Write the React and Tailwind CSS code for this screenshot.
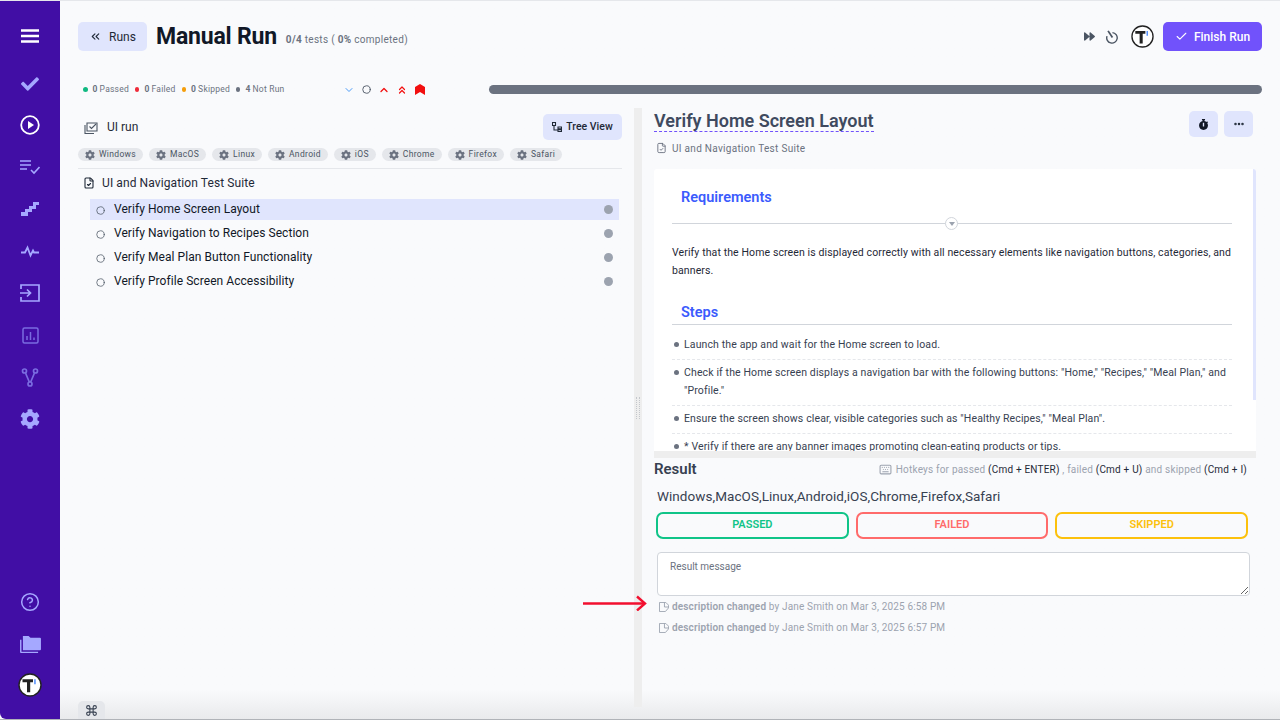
import React from 'react';
import { Check, ChevronDown, ChevronUp, ChevronsLeft, ChevronsUp, Circle, CircleHelp, Command, Ellipsis, Keyboard, FileCheck } from 'lucide-react';
import { FaCheck, FaCog, FaForward, FaStopwatch } from 'react-icons/fa';

const tags = ['Windows', 'MacOS', 'Linux', 'Android', 'iOS', 'Chrome', 'Firefox', 'Safari'];
const cases = [
  'Verify Home Screen Layout',
  'Verify Navigation to Recipes Section',
  'Verify Meal Plan Button Functionality',
  'Verify Profile Screen Accessibility',
];
const stats = [
  { n: '0', label: 'Passed', dot: 'bg-[#10b981]' },
  { n: '0', label: 'Failed', dot: 'bg-[#ef2b3a]' },
  { n: '0', label: 'Skipped', dot: 'bg-[#f59e0b]' },
  { n: '4', label: 'Not Run', dot: 'bg-[#6b7280]' },
];

const Logo = ({ className }) => (
  <svg viewBox="0 0 24 24" className={className}>
    <circle cx="12" cy="12" r="11" fill="#fff" stroke="#222" strokeWidth="1.4" />
    <path d="M4.500 6.200h10.500v3h-2.800v10H9v-10H4.500z" fill="#222" />
    <path d="M16.200 6.200h1.500v5h-1.500z" fill="#4f8dfd" />
  </svg>
);

const PlayCircle = () => (
  <svg viewBox="0 0 20 20" className="w-[20px] h-[20px]" fill="none" stroke="#fff" strokeWidth="1.8">
    <circle cx="10" cy="10" r="8.800" />
    <path d="M8 6l6 4-6 4z" fill="#fff" stroke="none" />
  </svg>
);

const ListCheck = () => (
  <svg viewBox="0 0 20 16" className="w-5 h-4" fill="none" stroke="#a5a8ff" strokeWidth="1.6">
    <path d="M0 2h11M0 6h11M0 10h7" />
    <path d="M11 11l3 3 5.500-6" />
  </svg>
);

const Stairs = () => (
  <svg viewBox="0 0 18 14" className="w-[18px] h-[14px]" fill="#a5a8ff">
    <path d="M0 14v-4h4V7h4V4h4V0h6v3h-3v4h-4v3H7v4z" />
  </svg>
);

const Pulse = () => (
  <svg viewBox="0 0 18 13" className="w-[18px] h-[13px]" fill="none" stroke="#a5a8ff" strokeWidth="1.8">
    <path d="M0 7.500h4l2.500-5 3 8 2.500-5 1 2h5" />
  </svg>
);

const ImportBox = () => (
  <svg viewBox="0 0 20 18" className="w-5 h-[18px]" fill="none" stroke="#a5a8ff" strokeWidth="1.7">
    <path d="M1 5V1h18v16H1v-4" />
    <path d="M0 9h10M7 5.500L10.500 9 7 12.500" />
  </svg>
);

const ChartBox = () => (
  <svg viewBox="0 0 17 17" className="w-[17px] h-[17px]" fill="none" stroke="#7a6ce0" strokeWidth="1.500">
    <rect x="1" y="1" width="15" height="15" rx="1.500" />
    <path d="M5 13V9M8.500 13V5M12 13v-2.500" />
  </svg>
);

const Fork = () => (
  <svg viewBox="0 0 18 19" className="w-[18px] h-[19px]" fill="none" stroke="#7a6ce0" strokeWidth="1.700">
    <circle cx="3.500" cy="3" r="2" />
    <circle cx="14.500" cy="3" r="2" />
    <circle cx="9" cy="16" r="2" />
    <path d="M4.500 5L8.300 14M13.500 5L9.700 14" />
  </svg>
);

const Folders = () => (
  <svg viewBox="0 0 24 20" className="w-[23px] h-[19px]" fill="#a5a8ff">
    <path d="M4 1h6l2 2h10a1 1 0 0 1 1 1v11a1 1 0 0 1-1 1H4z" />
    <path d="M1 5h1.500v12.500H20V19H2a1 1 0 0 1-1-1z" />
  </svg>
);

const Sidebar = () => (
  <aside className="w-[60px] shrink-0 bg-[#410ea5] flex flex-col items-center rounded-bl-md">
    <div className="h-[70px] flex items-center">
      <svg viewBox="0 0 18 14" className="w-[18px] h-[14px]" fill="none" stroke="#fff" strokeWidth="2.600">
        <path d="M0 1.500h18M0 7h18M0 12.500h18" />
      </svg>
    </div>
    <div className="flex flex-col items-center">
      <div className="h-[26px] flex items-center"><FaCheck className="text-[#a5a8ff] w-[18px] h-[18px]" /></div>
      <div className="h-[42px] mt-[7px] flex items-center"><PlayCircle /></div>
      <div className="h-[42px] flex items-center"><ListCheck /></div>
      <div className="h-[42px] flex items-center"><Stairs /></div>
      <div className="h-[42px] flex items-center"><Pulse /></div>
      <div className="h-[42px] flex items-center"><ImportBox /></div>
      <div className="h-[42px] flex items-center"><ChartBox /></div>
      <div className="h-[42px] flex items-center"><Fork /></div>
      <div className="h-[42px] flex items-center"><FaCog className="text-[#a5a8ff] w-[20px] h-[20px]" /></div>
    </div>
    <div className="mt-auto flex flex-col items-center pb-[22px]">
      <CircleHelp className="text-[#a5a8ff] w-[20px] h-[20px] mb-[23px]" strokeWidth={1.8} />
      <Folders />
      <Logo className="w-[24px] h-[24px] mt-[19px]" />
    </div>
  </aside>
);

const Header = () => (
  <div className="flex items-center h-[29px] mt-[21px]">
    <button className="w-[69px] h-[29px] rounded-[5px] bg-[#e0e5fd] flex items-center justify-center gap-[7px] text-[12px] text-[#1f2937]">
      <ChevronsLeft className="w-[13px] h-[13px]" />
      Runs
    </button>
    <h1 className="ml-[9px] text-[23px] font-bold text-[#111827] leading-none tracking-[-0.2px]">Manual Run</h1>
    <p className="ml-[9px] mt-[6px] text-[10px] text-[#6b7280] tracking-[0.3px]">
      <b>0/4</b> tests ( <b>0%</b> completed)
    </p>
    <div className="ml-auto flex items-center">
      <FaForward className="text-[#4b5563] w-[11px] h-[11px]" />
      <svg viewBox="0 0 16 16" className="ml-[10px] w-[14px] h-[14px]" fill="none" stroke="#4b5563" strokeWidth="1.600">
        <path d="M8.500 3a6 6 0 1 1-6.200 4" />
        <path d="M3.500 1L8.500 8.500" strokeWidth="2" />
      </svg>
      <Logo className="ml-[12px] w-[23px] h-[23px]" />
      <button className="ml-[9px] w-[99px] h-[29px] rounded-[5px] bg-[#7152fb] text-white text-[12px] font-medium flex items-center justify-center gap-[6px]">
        <Check className="w-[13px] h-[13px]" />
        Finish Run
      </button>
    </div>
  </div>
);

const StatsRow = () => (
  <div className="flex items-center h-[9px] mt-[34px]">
    <div className="flex items-center gap-[6px] pl-[5px] w-[265px]">
      {stats.map((s) => (
        <span key={s.label} className="flex items-center text-[8.5px] text-[#6b7280] tracking-[0.22px]">
          <span className={`w-[4.5px] h-[4.5px] rounded-full mr-[5px] ${s.dot}`} />
          <b className="mr-[2px]">{s.n}</b> {s.label}
        </span>
      ))}
    </div>
    <div className="flex items-center gap-[6px] w-[146px]">
      <ChevronDown className="w-[12px] h-[12px] text-[#4a9bf8]" />
      <Circle className="w-[9px] h-[9px] text-[#4b5563] ml-[1px]" strokeWidth={2.4} />
      <ChevronUp className="w-[12px] h-[12px] text-[#f20f0f] ml-[1px]" strokeWidth={2.6} />
      <ChevronsUp className="w-[12px] h-[12px] text-[#f20f0f]" strokeWidth={2.4} />
      <svg viewBox="0 0 10 11" className="w-[10px] h-[11px] ml-[1px]" fill="#f20f0f">
        <path d="M0 11V3l5-3 5 3v8L5 8z" />
      </svg>
    </div>
    <div className="flex-1 h-[9px] rounded-full bg-[#6b7280]" />
  </div>
);

const LeftPanel = () => (
  <section className="w-[544px] shrink-0">
    <div className="flex items-center h-[26px] mt-[6px] pl-[6px]">
      <svg viewBox="0 0 14 14" className="w-[14px] h-[14px]" fill="none" stroke="#4b5563" strokeWidth="1.100">
        <path d="M3 3h10v8H3z" />
        <path d="M1 5v8.500h9" />
        <path d="M5.500 6.500l2 2L12 4" />
      </svg>
      <span className="ml-[9px] text-[12px] text-[#1f2937]">UI run</span>
      <button className="ml-auto w-[79px] h-[26px] rounded-[5px] bg-[#e0e5fd] flex items-center justify-center gap-[4px] text-[10.5px] font-medium text-[#1f2937]">
        <svg viewBox="0 0 10 10" className="w-[10px] h-[10px]" fill="none" stroke="#1f2937" strokeWidth="1.100">
          <path d="M.5.5h3v3h-3zM6 5h3.500v1.800H6zM6 7.700h3.500v1.800H6zM2 4v4h4" />
        </svg>
        Tree View
      </button>
    </div>
    <div className="flex gap-[6px] mt-[8px] pb-[7px] border-b border-[#e5e7eb]">
      {tags.map((t) => (
        <span key={t} className="h-[13px] rounded-full bg-[#e5e7eb] px-[7px] flex items-center gap-[4px] text-[8.5px] text-[#4b5563] tracking-[0.33px]">
          <FaCog className="w-[10px] h-[10px] text-[#6b7280]" />
          {t}
        </span>
      ))}
    </div>
    <div className="flex items-center h-[28px] pl-[5px]">
      <FileCheck className="w-[12px] h-[12px] text-[#1f2937]" strokeWidth={2.2} />
      <span className="ml-[7px] text-[12px] text-[#1f2937] tracking-[0.1px]">UI and Navigation Test Suite</span>
    </div>
    <ul className="ml-[12px] mr-[3px] mt-[2px]">
      {cases.map((c, i) => (
        <li key={c} className={`flex items-center h-[21px] mb-[3px] pl-[6px] pr-[6px] ${i === 0 ? 'bg-[#e0e5fd]' : ''}`}>
          <Circle className="w-[9px] h-[9px] mt-[2px] text-[#4b5563]" strokeWidth={2} />
          <span className="ml-[9px] -mt-[2px] text-[12px] text-[#111827] tracking-[0.06px]">{c}</span>
          <span className="ml-auto w-[9px] h-[9px] rounded-full bg-[#9ca3af]" />
        </li>
      ))}
    </ul>
  </section>
);

const Divider = () => (
  <div className="ml-[12px] mr-[12px] w-[8px] h-[599px] shrink-0 bg-[#eeeeee] flex items-center justify-center">
    <span className="w-[4px] h-[22px] border-x border-dotted border-[#c4c7cc]" />
  </div>
);

const StepItem = ({ children, last }) => (
  <li className={`flex ml-[18px] mr-[24px] pb-[5px] pt-[4px] ${last ? '' : 'border-b border-dashed border-[#e5e7eb]'}`}>
    <span className="w-[5px] h-[5px] rounded-full bg-[#6b7280] mt-[6px] ml-[2px] mr-[5px] shrink-0" />
    <span className="text-[10.5px] leading-[18px] text-[#374151] tracking-[0.13px]">{children}</span>
  </li>
);

const Details = () => (
  <div className="relative h-[289px] w-[602px] bg-white overflow-hidden rounded-t-[3px]">
    <h3 className="ml-[27px] mt-[20px] text-[14.5px] font-semibold leading-[18px] text-[#3b5bfd]">Requirements</h3>
    <div className="relative ml-[18px] mr-[24px] mt-[16px] h-px bg-[#d1d5db]">
      <span className="absolute left-[273px] -top-[6px] w-[13px] h-[13px] rounded-full border border-[#d1d5db] bg-white flex items-center justify-center">
        <span className="w-0 h-0 border-x-[3px] border-x-transparent border-t-[4px] border-t-[#9ca3af]" />
      </span>
    </div>
    <p className="ml-[18px] mr-[20px] mt-[20px] text-[10.5px] leading-[18px] text-[#1f2937] tracking-[0.11px]">
      Verify that the Home screen is displayed correctly with all necessary elements like navigation buttons, categories, and banners.
    </p>
    <h3 className="ml-[27px] mt-[24px] text-[14.5px] font-semibold leading-[18px] text-[#3b5bfd]">Steps</h3>
    <div className="ml-[18px] mr-[24px] mt-[2px] h-px bg-[#d1d5db]" />
    <ul className="mt-[7px]">
      <StepItem>Launch the app and wait for the Home screen to load.</StepItem>
      <StepItem>Check if the Home screen displays a navigation bar with the following buttons: "Home," "Recipes," "Meal Plan," and "Profile."</StepItem>
      <StepItem>Ensure the screen shows clear, visible categories such as "Healthy Recipes," "Meal Plan".</StepItem>
      <StepItem last>* Verify if there are any banner images promoting clean-eating products or tips.</StepItem>
    </ul>
    <span className="absolute right-0 top-0 w-[3px] h-[231px] bg-[#e0e5fd]" />
  </div>
);

const ResultButton = ({ label, className }) => (
  <button className={`h-[27px] flex-1 rounded-[7px] border-2 bg-transparent text-[11px] font-semibold ${className}`}>{label}</button>
);

const LogLine = ({ time }) => (
  <div className="flex items-center h-[21px] pl-[2px] text-[10px] text-[#9ca3af] tracking-[0.15px]">
    <svg viewBox="0 0 11 11" className="w-[10px] h-[10px] mr-[3px]" fill="none" stroke="#9ca3af" strokeWidth="1">
      <path d="M.5.5h7l3 3v3L7 10.500H.5z" />
      <path d="M6 .5v5h4.500" />
    </svg>
    <b className="font-semibold">description changed</b>&nbsp;by Jane Smith on Mar 3, 2025 {time}
  </div>
);

const RightPanel = () => (
  <section className="w-[602px] shrink-0">
    <div className="flex items-start mt-[2px] h-[30px]">
      <h2 className="text-[18px] font-semibold leading-[21px] text-[#3f4a5f] border-b border-dashed border-[#7152fb]">Verify Home Screen Layout</h2>
      <div className="ml-auto mr-[3px] flex gap-[6px] mt-[1px]">
        <button className="w-[29px] h-[26px] rounded-[5px] bg-[#e0e5fd] flex items-center justify-center">
          <FaStopwatch className="w-[11px] h-[11px] text-[#111827]" />
        </button>
        <button className="w-[29px] h-[26px] rounded-[5px] bg-[#e0e5fd] flex items-center justify-center">
          <Ellipsis className="w-[12px] h-[12px] text-[#1f2937]" strokeWidth={3} />
        </button>
      </div>
    </div>
    <div className="flex items-center h-[14px] mt-[1px] pl-[2px] text-[10px] text-[#6b7280] tracking-[0.3px]">
      <FileCheck className="w-[11px] h-[12px] mr-[5px]" />
      UI and Navigation Test Suite
    </div>
    <div className="mt-[14px]"><Details /></div>
    <div className="w-[602px] h-[7px] -mt-[7px] relative bg-[#eeeeee]" />
    <div className="flex items-center h-[22px] pr-[9px]">
      <h3 className="text-[15px] font-semibold text-[#374151]">Result</h3>
      <p className="ml-auto flex items-center text-[10px] text-[#9ca3af] tracking-[0.2px]">
        <Keyboard className="w-[13px] h-[13px] mr-[4px]" />
        Hotkeys for passed&nbsp;<span className="text-[#1f2937]">(Cmd + ENTER)</span>&nbsp;, failed&nbsp;<span className="text-[#1f2937]">(Cmd + U)</span>&nbsp;and skipped&nbsp;<span className="text-[#1f2937]">(Cmd + I)</span>
      </p>
    </div>
    <p className="ml-[3px] mt-[7px] text-[13.5px] leading-[18px] text-[#374151] tracking-[0.05px]">Windows,MacOS,Linux,Android,iOS,Chrome,Firefox,Safari</p>
    <div className="flex gap-[7px] ml-[2px] mr-[8px] mt-[7px]">
      <ResultButton label="PASSED" className="border-[#10c488] text-[#10c488]" />
      <ResultButton label="FAILED" className="border-[#ff6b6b] text-[#ff6b6b]" />
      <ResultButton label="SKIPPED" className="border-[#fcc10c] text-[#fcc10c]" />
    </div>
    <textarea
      placeholder="Result message"
      className="block ml-[3px] mt-[13px] w-[593px] h-[44px] rounded-[4px] border border-[#d1d5db] bg-white px-[12px] py-[6px] text-[10px] placeholder:text-[#6b7280]"
    />
    <div className="ml-[3px]">
      <LogLine time="6:58 PM" />
      <LogLine time="6:57 PM" />
    </div>
  </section>
);

export default function App() {
  return (
    <div className="relative flex w-screen h-screen overflow-hidden bg-[#f9fafc] font-['Roboto',sans-serif] border-t border-b border-t-[#e5e7eb] border-b-[#b0b3b8]">
      <Sidebar />
      <main className="flex-1 min-w-0 px-[18px] bg-gradient-to-b from-[#f9fafc] from-[96%] to-[#e9eaec]">
        <Header />
        <StatsRow />
        <div className="flex mt-[14px]">
          <LeftPanel />
          <Divider />
          <RightPanel />
        </div>
      </main>

      {/* shortcut tab sits over the page bottom */}
      <div className="absolute left-[78px] bottom-0 w-[27px] h-[18px] rounded-t-[5px] bg-[#e5e7eb] flex items-center justify-center">
        <Command className="w-[13px] h-[13px] text-[#374151]" />
      </div>
      {/* red annotation arrow drawn on top of the screenshot */}
      <svg viewBox="0 0 64 16" className="absolute left-[583px] top-[594px] w-[64px] h-[16px]" fill="none" stroke="#f20f2f" strokeWidth="2.400">
        <path d="M0 8.500h61" />
        <path d="M54 1.500l8 7-8 7" />
      </svg>
    </div>
  );
}
